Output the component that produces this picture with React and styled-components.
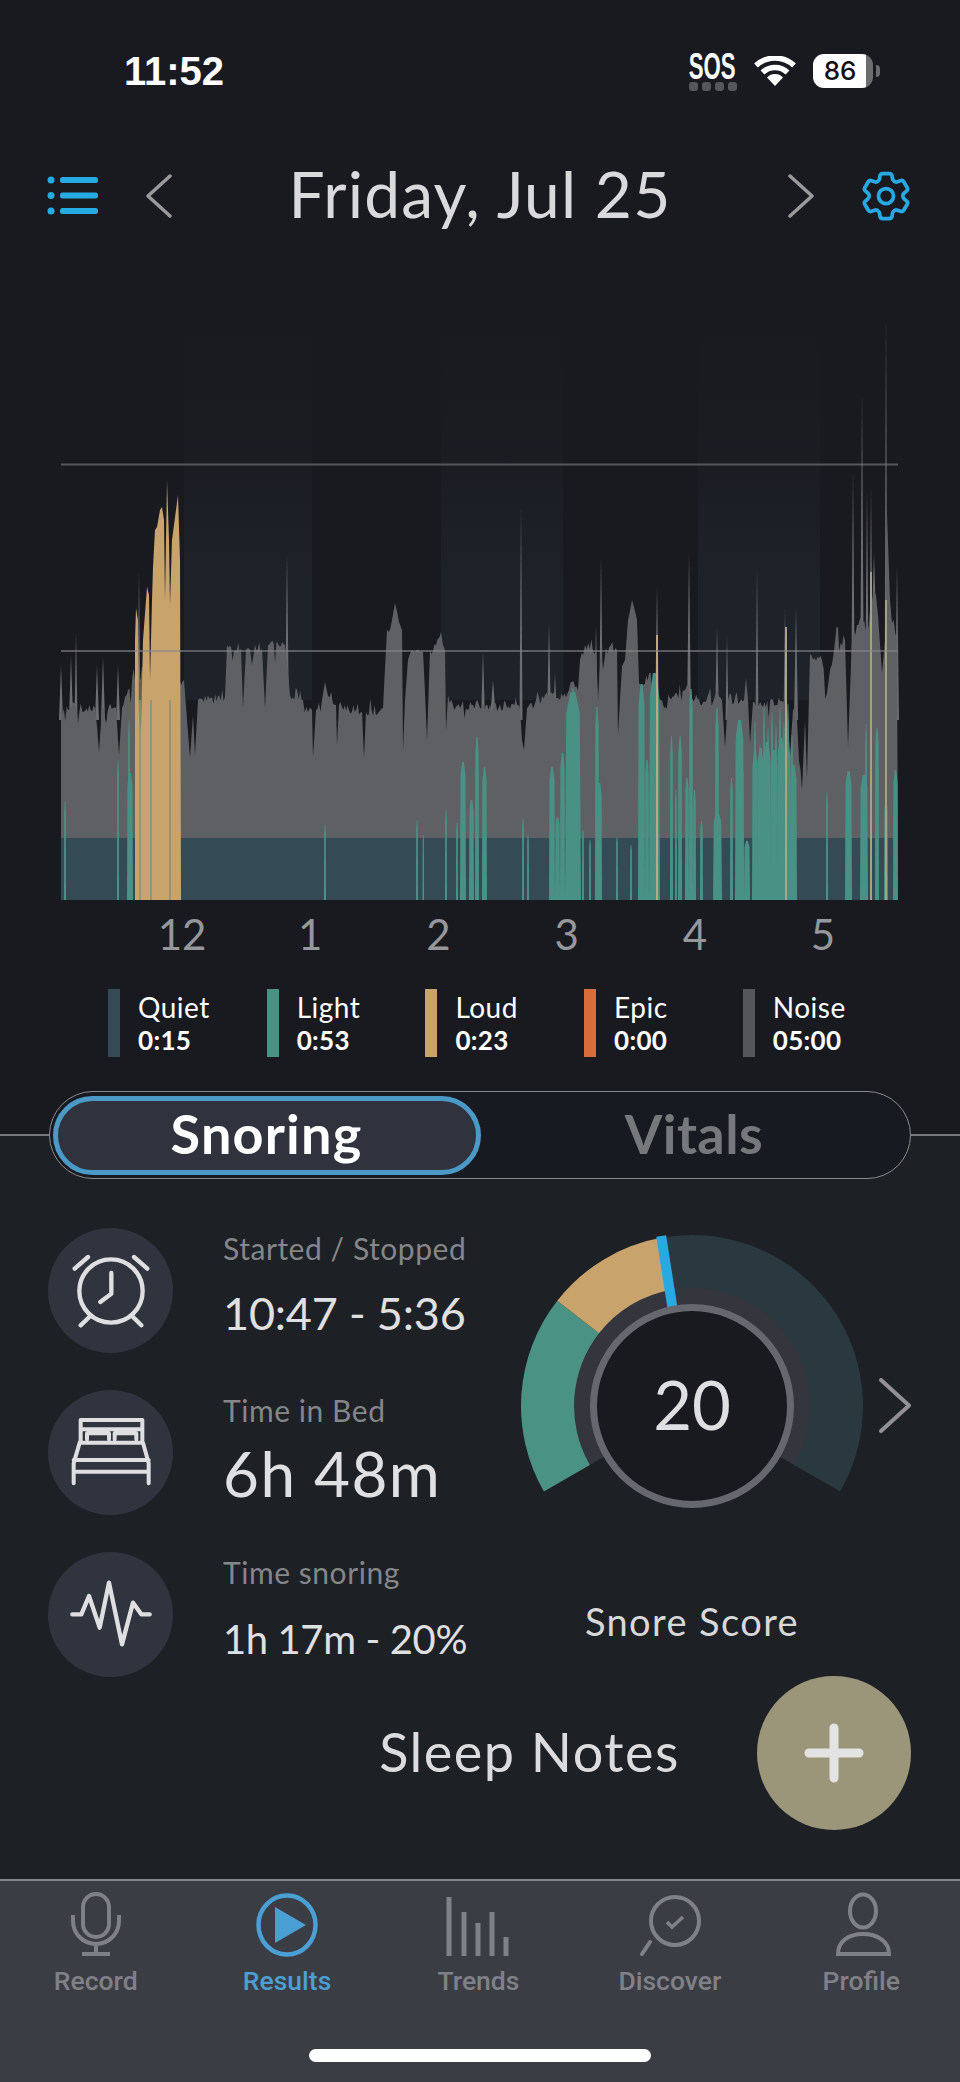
import React from 'react';
import styled, { createGlobalStyle } from 'styled-components';
import { HiOutlineCog6Tooth } from 'react-icons/hi2';

const sans = '"Lato", "Open Sans", sans-serif';

const GlobalStyle = createGlobalStyle`
  html, body { margin: 0; padding: 0; background: #191a20; }
  * { box-sizing: border-box; }
`;

const Screen = styled.div`
  width: 960px;
  height: 2082px;
  overflow: hidden;
  display: flex;
  flex-direction: column;
  background: #191a20;
  font-family: ${sans};
`;

/* status bar */
const StatusBar = styled.div`
  height: 142px;
  flex: none;
  display: flex;
  align-items: center;
  justify-content: space-between;
  padding: 0 80px 0 124px;
`;

const Clock = styled.span`
  font: 700 40px "Liberation Sans", sans-serif;
  color: #fff;
`;

const StatusIcons = styled.div`
  display: flex;
  align-items: center;
  gap: 17px;
`;

const Sos = styled.div`
  width: 49px;
  display: flex;
  flex-direction: column;
  align-items: center;
  gap: 1px;
`;

const SosText = styled.span`
  font: 700 37px/29px "Liberation Sans", sans-serif;
  color: #fff;
  transform: scaleX(0.6);
`;

const SosDots = styled.div`
  display: flex;
  gap: 4px;
`;

const SosDot = styled.i`
  width: 9px;
  height: 9px;
  border-radius: 3px;
  background: #55565b;
`;

const Battery = styled.div`
  display: flex;
  align-items: center;
  gap: 3px;
`;

const BatteryBody = styled.div`
  width: 60px;
  height: 34px;
  border-radius: 11px;
  padding-right: 6px;
  background: linear-gradient(90deg, #fff 88%, #6b6c70 88%);
  color: #111;
  font: 500 26px/34px Inter, sans-serif;
  text-align: center;
`;

const BatteryTip = styled.i`
  width: 4px;
  height: 12px;
  border-radius: 0 4px 4px 0;
  background: #6b6c70;
`;

/* date header */
const DateNav = styled.div`
  height: 108px;
  flex: none;
  display: flex;
  align-items: center;
  padding: 0 44px 0 47px;
`;

const NavBtn = styled.div`
  flex: none;
  display: flex;
  margin-left: ${(p) => p.$left || 0}px;
  color: ${(p) => p.$color || '#9a9a9c'};
`;

const DateTitle = styled.div`
  flex: 1;
  text-align: center;
  font-size: 64px;
  letter-spacing: 1.2px;
  padding-bottom: 5px;
  color: #dadadc;
  white-space: nowrap;
`;

const ChartSvg = styled.svg`
  display: block;
  flex: none;
  width: 960px;
  height: 660px;
`;

const Axis = styled.div`
  height: 50px;
  flex: none;
  display: grid;
  grid-template-columns: repeat(6, 128.2px);
  padding-left: 118px;
`;

const AxisLabel = styled.span`
  text-align: center;
  font-size: 42px;
  line-height: 48px;
  color: #96979b;
`;

const Legend = styled.div`
  flex: none;
  display: grid;
  grid-template-columns: repeat(5, 158.7px);
  padding: 29px 0 0 108px;
`;

const LegendItem = styled.div`
  display: flex;
  gap: 18px;
  height: 68px;
`;

const Swatch = styled.i`
  width: 12px;
  background: ${(p) => p.$color};
`;

const LegendText = styled.div`
  display: flex;
  flex-direction: column;
  color: #fff;
  font-size: 28px;
  letter-spacing: 0.5px;
  line-height: 33px;
  padding-top: 2px;
`;

const LegendValue = styled.span`
  font-weight: 700;
  font-size: 26px;
  letter-spacing: 0.3px;
`;

/* segmented toggle, sitting on the border between header and panel */
const ToggleRow = styled.div`
  flex: none;
  margin-top: 34px;
  display: flex;
  align-items: center;
  background: linear-gradient(#191a20 50%, #1d2025 50%);
`;

const RuleLine = styled.i`
  flex: 1;
  height: 2px;
  background: #77787a;
`;

const Toggle = styled.div`
  width: 862px;
  height: 88px;
  flex: none;
  display: flex;
  align-items: center;
  padding: 0 2.5px;
  border: 1.5px solid #8b8b8d;
  border-radius: 44px;
  background: #181a21;
`;

const ToggleTab = styled.div`
  flex: ${(p) => (p.$active ? '0 0 428px' : '1')};
  height: 79px;
  display: flex;
  align-items: center;
  justify-content: center;
  padding-bottom: 3px;
  font-size: 54px;
  font-weight: 700;
  letter-spacing: ${(p) => (p.$active ? 1.2 : 0.4)}px;
  border-radius: 40px;
  color: ${(p) => (p.$active ? '#fff' : '#77787b')};
  background: ${(p) => (p.$active ? '#30333d' : 'none')};
  border: ${(p) => (p.$active ? '5px solid #4b99c6' : 'none')};
`;

/* lower panel */
const Panel = styled.div`
  height: 700px;
  flex: none;
  background: #1d2025;
  padding-top: 49px;
`;

const PanelTop = styled.div`
  display: flex;
`;

const Stats = styled.div`
  width: 521px;
  flex: none;
  padding-left: 48px;
  display: flex;
  flex-direction: column;
  gap: 37px;
`;

const StatRow = styled.div`
  display: flex;
  gap: 50px;
`;

const StatBadge = styled.div`
  width: 125px;
  height: 125px;
  flex: none;
  border-radius: 50%;
  background: #30343f;
`;

const StatLabel = styled.div`
  font-size: 30px;
  letter-spacing: 0.55px;
  line-height: 40px;
  color: #85868a;
  white-space: nowrap;
`;

const StatValue = styled.div`
  font-size: ${(p) => p.$size}px;
  letter-spacing: ${(p) => p.$track}px;
  line-height: 60px;
  margin-top: ${(p) => p.$gap}px;
  color: #e0e0e2;
  white-space: nowrap;
`;

const ScoreCol = styled.div`
  width: 342px;
  flex: none;
`;

const ScoreLabel = styled.div`
  margin-top: 81px;
  text-align: center;
  font-size: 38px;
  letter-spacing: 1.4px;
  line-height: 44px;
  color: #d8d8da;
`;

const ScoreChevron = styled.div`
  margin: 150px 0 0 16px;
  display: flex;
`;

const Notes = styled.div`
  display: flex;
  align-items: center;
  justify-content: flex-end;
  gap: 77px;
  padding-right: 49px;
  margin-top: -1px;
`;

const NotesTitle = styled.span`
  font-size: 54px;
  letter-spacing: 1.5px;
  padding-bottom: 4px;
  color: #dcdcde;
`;

const Fab = styled.div`
  width: 154px;
  height: 154px;
  border-radius: 50%;
  background: #9b9679;
  display: flex;
  align-items: center;
  justify-content: center;
`;

/* tab bar */
const TabBar = styled.div`
  flex: 1;
  background: #3b3d45;
  border-top: 2px solid #85868a;
  padding-top: 10px;
  display: flex;
  flex-direction: column;
  align-items: center;
`;

const Tabs = styled.div`
  width: 957px;
  align-self: flex-start;
  display: grid;
  grid-template-columns: repeat(5, 1fr);
`;

const Tab = styled.div`
  display: flex;
  flex-direction: column;
  align-items: center;
  gap: 7px;
  color: ${(p) => (p.$active ? '#4a9fd4' : '#808186')};
`;

const TabLabel = styled.span`
  font: 500 26.5px/30px Roboto, sans-serif;
`;

const HomeBar = styled.div`
  width: 342px;
  height: 13px;
  margin-top: 53px;
  border-radius: 7px;
  background: #fff;
`;

/* chart data, all in page coordinates */
const BASE = 900;
const OUTLINE = [
  [61, 705], [95, 708], [99, 752], [102, 708], [116, 708], [119, 755], [122, 708], [128, 690], [135, 680],
  [184, 680], [187, 720], [190, 758], [193, 715], [195, 755], [198, 700], [225, 697], [227, 645], [241, 648],
  [243, 708], [246, 650], [250, 650], [252, 665], [255, 645], [262, 648], [265, 708], [268, 645], [285, 645],
  [288, 672], [290, 695], [303, 700], [308, 712], [312, 710], [313, 757], [316, 710], [322, 700], [325, 682],
  [328, 696], [336, 705], [337, 745], [339, 705], [362, 712], [364, 758], [366, 712], [383, 708], [387, 630],
  [392, 620], [395, 603], [399, 622], [402, 630], [403, 750], [405, 700], [408, 660], [412, 650], [423, 652],
  [427, 740], [430, 650], [436, 645], [441, 632], [445, 650], [446, 730], [448, 695], [453, 705], [520, 708],
  [524, 750], [527, 708], [545, 695], [563, 697], [572, 682], [578, 690], [580, 660], [585, 645], [596, 650],
  [598, 700], [601, 650], [603, 670], [606, 648], [617, 650], [618, 735], [620, 700], [622, 666], [625, 660],
  [628, 620], [632, 600], [635, 611], [637, 620], [639, 683], [655, 673], [660, 700], [664, 708], [687, 685],
  [692, 698], [713, 702], [717, 690], [722, 700], [725, 747], [728, 700], [744, 700], [746, 678], [748, 700],
  [750, 743], [753, 702], [783, 702], [787, 700], [790, 755], [793, 710], [796, 705], [802, 790], [805, 720],
  [807, 778], [810, 654], [822, 660], [827, 693], [835, 642], [845, 640], [848, 747], [852, 640], [857, 625],
  [870, 610], [874, 590], [878, 615], [882, 673], [885, 640], [887, 514], [890, 600], [892, 623], [897, 640],
  [898, BASE], [61, BASE],
];

const SPIKES = [
  [61, 665, 2], [71, 655, 2], [76, 632, 1.5], [97, 665, 2], [103, 657, 2], [118, 665, 2], [139, 570, 1.5],
  [287, 553, 2], [483, 651, 2], [493, 680, 3], [521, 505, 1.5], [549, 623, 2], [555, 673, 2], [596, 625, 2],
  [601, 557, 2], [657, 586, 2], [689, 553, 2], [717, 627, 2], [727, 635, 1.5], [757, 568, 1.5], [785, 607, 1.5],
  [796, 607, 2], [853, 471, 2], [862, 393, 2], [867, 490, 2], [871, 487, 2], [874, 553, 5], [886, 316, 1.5], [897, 565, 2],
];

const TEAL = [
  [64, 66, 802], [117, 119, 760], [127, 133, 773], [128, 130, 720], [138, 142, 700], [149, 153, 700],
  [324, 326, 825], [416, 418, 820], [422.5, 424, 835], [445, 447, 810], [456, 458, 823], [460, 466, 762],
  [469, 474, 800], [475, 479, 737], [482, 487, 767], [522, 524, 818], [527, 529, 835], [549, 555, 767],
  [555, 560, 817], [560, 565, 753], [565, 581, 692], [571, 575, 688], [582, 584, 830],
  [589, 591, 840], [595, 599, 707], [597, 602, 783], [616, 618, 837], [630, 632, 845], [638, 645, 684],
  [645, 649, 760], [649, 660, 673], [670, 673, 736], [675, 677, 790], [678, 682, 736], [685, 689, 778],
  [689, 693, 689], [693, 696, 790], [700, 703, 821], [713, 722, 813], [715, 719, 708], [730, 733, 778],
  [735, 744, 720], [739, 744, 760], [744, 750, 841],
  [752, 758, 750], [757, 764, 748], [763, 771, 742], [770, 778, 750], [777, 785, 738], [784, 791, 742], [790, 797, 765],
  [754, 756, 722], [759, 761, 745], [763, 765, 706], [767, 769, 728], [771, 773, 712], [775, 777, 726],
  [779, 781, 708], [783, 785, 722], [787, 789, 704], [791, 793, 735],
  [826, 828, 792], [845, 852, 771], [860, 868, 775],
  [865, 867, 724], [875, 879, 728], [884, 888, 800], [893, 898, 770],
];

const GOLD_LINES = [[657, 635, 2, '#bdaa78'], [786, 627, 2, '#a9a67f'], [871, 572, 2, '#a5a283'], [886, 600, 2, '#a5a283']];

const LOUD = [
  [135, BASE], [135, 640], [136, 608], [138, 620], [139, 720], [141, 730], [143, 640], [147, 587], [149, 595],
  [150, 680], [152, 600], [153, 567], [155, 530], [157, 527], [160, 510], [162, 507], [164, 520], [165, 600],
  [167, 480], [169, 540], [170, 605], [172, 540], [174, 525], [178, 495], [180, 560], [181, BASE],
];

// jitter the long flat stretches so the outline looks like sampled audio
const noisePath = () => {
  let seed = 17;
  const rnd = () => (seed = (seed * 16807) % 2147483647) / 2147483647;
  const pts = [];
  OUTLINE.forEach(([x, y], i) => {
    pts.push([x, y]);
    const next = OUTLINE[i + 1];
    if (!next || next[1] === BASE) return;
    const dx = next[0] - x;
    if (dx < 4) return;
    const n = Math.floor(dx / 1.4);
    for (let k = 1; k < n; k++) {
      const t = k / n;
      const r = rnd();
      const kick = r < 0.07 ? 13 : r > 0.94 ? -10 : 0;
      pts.push([x + dx * t, y + (next[1] - y) * t + (rnd() - 0.45) * 10 + kick]);
    }
  });
  return 'M' + pts.map((p) => p[0].toFixed(1) + ' ' + p[1].toFixed(1)).join('L') + 'Z';
};

const taper = ([x0, x1, top]) => {
  const w = x1 - x0;
  const mid = top + (BASE - top) * 0.1;
  return `${x0},${BASE} ${x0 + w * 0.08},${mid} ${x0 + w * 0.35},${top} ${x1 - w * 0.35},${top} ${x1 - w * 0.08},${mid} ${x1},${BASE}`;
};

const NOISE_D = noisePath();

const Chart = () => (
  <ChartSvg viewBox="0 250 960 660">
    <defs>
      <linearGradient id="band" x1="0" y1="0" x2="0" y2="1">
        <stop offset="0" stopColor="#1e2229" stopOpacity="0" />
        <stop offset="0.35" stopColor="#1e2229" stopOpacity="0.25" />
        <stop offset="0.7" stopColor="#1e2229" />
      </linearGradient>
    </defs>
    {[[184, 128], [441, 122], [698, 122]].map(([x, w]) => (
      <rect key={x} x={x} y={320} width={w} height={380} fill="url(#band)" />
    ))}
    {SPIKES.map(([x, top, w]) => (
      <polygon key={x} points={`${x - w},720 ${x},${top} ${x + w},720`} fill="#6c6d71" />
    ))}
    <path d={NOISE_D} fill="#5f6064" />
    <rect x={61} y={838} width={837} height={62} fill="#344b56" />
    {TEAL.map((t) => (
      <polygon key={t[0] + '-' + t[2]} points={taper(t)} fill="#4a9185" />
    ))}
    <polygon points={LOUD.map((p) => p.join(',')).join(' ')} fill="#c9a36c" />
    {[140, 151, 170].map((x) => (
      <rect key={x} x={x - 0.75} y={700} width={1.5} height={200} fill="#7f9180" />
    ))}
    {GOLD_LINES.map(([x, top, w, color]) => (
      <rect key={x} x={x - w / 2} y={top} width={w} height={BASE - top} fill={color} />
    ))}
    <rect x={61} y={463.5} width={837} height={2} fill="#7f7f84" fillOpacity="0.6" />
    <rect x={61} y={650} width={837} height={2} fill="#85858a" fillOpacity="0.6" />
  </ChartSvg>
);

const polar = (r, deg) => {
  const a = (deg * Math.PI) / 180;
  return [(r * Math.sin(a)).toFixed(2), (-r * Math.cos(a)).toFixed(2)];
};

const sector = (r0, r1, from, to) => {
  const [a, b] = polar(r1, from);
  const [c, d] = polar(r1, to);
  const [e, f] = polar(r0, to);
  const [g, h] = polar(r0, from);
  const large = to - from > 180 ? 1 : 0;
  return `M${a} ${b}A${r1} ${r1} 0 ${large} 1 ${c} ${d}L${e} ${f}A${r0} ${r0} 0 ${large} 0 ${g} ${h}Z`;
};

const Gauge = () => (
  <svg width="342" height="290" viewBox="-171 -178 342 290" style={{ display: 'block' }}>
    <path d={sector(100, 119, -120, 120)} fill="#35363d" />
    <path d={sector(118, 171, -120, -52)} fill="#4a9283" />
    <path d={sector(118, 171, -52, -10)} fill="#c9a36c" />
    <path d={sector(118, 171, -10, 120)} fill="#2a3840" />
    <line x1="-30.8" y1="-170" x2="-19.5" y2="-98" stroke="#27a9e1" strokeWidth="10" />
    <circle r="98.5" fill="#191a20" stroke="#67676f" strokeWidth="7" />
    <text y="24" textAnchor="middle" fontSize="67" fontFamily={sans} fill="#dfdfe1">20</text>
  </svg>
);

const Chevron = ({ dir = 'right', w = 26, h = 44, sw = 3.5, color = '#9a9a9c' }) => (
  <svg width={w} height={h} viewBox={`0 0 ${w} ${h}`} fill="none" stroke={color} strokeWidth={sw} strokeLinecap="round" strokeLinejoin="round">
    {dir === 'right'
      ? <path d={`M2 2L${w - 2} ${h / 2}L2 ${h - 2}`} />
      : <path d={`M${w - 2} 2L2 ${h / 2}L${w - 2} ${h - 2}`} />}
  </svg>
);

const Wifi = () => (
  <svg width="42" height="30" viewBox="0 0 42 30" fill="none" stroke="#fff" strokeWidth="5.5">
    <path d="M2 9.5A28 28 0 0 1 40 9.5" />
    <path d="M8.5 16.5A18 18 0 0 1 33.5 16.5" />
    <path d="M21 30L13 21.5A11 11 0 0 1 29 21.5Z" fill="#fff" stroke="none" />
  </svg>
);

const ListIcon = () => (
  <svg width="52" height="40" viewBox="0 0 52 40" fill="#27a9e1">
    <circle cx="4" cy="4" r="3.5" />
    <circle cx="4" cy="19.5" r="3.5" />
    <circle cx="4" cy="35" r="3.5" />
    <rect x="13" y="1" width="38" height="6" rx="2.5" />
    <rect x="13" y="16.5" width="38" height="6" rx="2.5" />
    <rect x="13" y="32" width="38" height="6" rx="2.5" />
  </svg>
);

const badgeStroke = { fill: 'none', stroke: '#dfdfe1', strokeWidth: 13, strokeLinecap: 'round', strokeLinejoin: 'round' };

const AlarmIcon = () => (
  <svg width="125" height="125" viewBox="145 83 375 375" {...badgeStroke}>
    <circle cx="334" cy="272" r="95" />
    <path d="M225 205L265 170M443 205L403 170M243 375L272 347M425 375L397 347M335 218V280L302 305" />
  </svg>
);

const BedIcon = () => (
  <svg width="125" height="125" viewBox="145 570 375 375" {...badgeStroke} strokeWidth="12">
    <path d="M243 725V660H428V725M243 688H428M262 718V700H328V718M345 718V700H410V718M240 728H430L447 790V850M240 728L222 790V850M222 780H447M222 815H447" />
  </svg>
);

const PulseIcon = () => (
  <svg width="125" height="125" viewBox="145 1053 375 375" {...badgeStroke}>
    <path d="M218 1240H245L268 1185L300 1280L328 1145L367 1330L400 1205L425 1240H450" />
  </svg>
);

const tabIcon = { width: 80, height: 68, viewBox: '0 0 80 68', fill: 'none', stroke: 'currentColor', strokeWidth: 4 };

const TAB_ICONS = {
  Record: (
    <svg {...tabIcon}>
      <rect x="27" y="3" width="26" height="43" rx="13" />
      <path d="M17 24V30a23 23 0 0 0 46 0V24M40 53V63M26 63H54" />
    </svg>
  ),
  Results: (
    <svg {...tabIcon} strokeWidth="4.5">
      <ellipse cx="40" cy="34" rx="28.5" ry="29.5" />
      <path d="M28 16L59 34L28 52Z" fill="currentColor" stroke="none" />
    </svg>
  ),
  Trends: (
    <svg {...tabIcon} strokeWidth="5">
      <path d="M11 6V65M26 21V65M40 32V65M54 21V65M68 46V65" />
    </svg>
  ),
  Discover: (
    <svg {...tabIcon}>
      <circle cx="45" cy="30" r="24" />
      <path d="M20 51L12 63" strokeLinecap="round" />
      <path d="M37 31L42 36L53 26" strokeWidth="3.5" />
    </svg>
  ),
  Profile: (
    <svg {...tabIcon}>
      <ellipse cx="42" cy="20" rx="13" ry="16.5" />
      <path d="M17 63C17 50 28 43 42 43C56 43 68 50 68 63Z" />
    </svg>
  ),
};

const HOURS = ['12', '1', '2', '3', '4', '5'];

const LEGEND = [
  ['Quiet', '0:15', '#344b56'],
  ['Light', '0:53', '#4a9185'],
  ['Loud', '0:23', '#c9a36c'],
  ['Epic', '0:00', '#d86c3a'],
  ['Noise', '05:00', '#55565b'],
];

const STATS = [
  { label: 'Started / Stopped', value: '10:47 - 5:36', size: 45, gap: 15, track: -0.2, icon: <AlarmIcon /> },
  { label: 'Time in Bed', value: '6h 48m', size: 62, gap: 13, track: 1.5, icon: <BedIcon /> },
  { label: 'Time snoring', value: '1h 17m - 20%', size: 40, gap: 17, track: -0.4, icon: <PulseIcon /> },
];

export default function App() {
  return (
    <Screen>
      <GlobalStyle />
      <StatusBar>
        <Clock>11:52</Clock>
        <StatusIcons>
          <Sos>
            <SosText>SOS</SosText>
            <SosDots>
              {[0, 1, 2, 3].map((d) => <SosDot key={d} />)}
            </SosDots>
          </Sos>
          <Wifi />
          <Battery>
            <BatteryBody>86</BatteryBody>
            <BatteryTip />
          </Battery>
        </StatusIcons>
      </StatusBar>

      <DateNav>
        <NavBtn><ListIcon /></NavBtn>
        <NavBtn $left={47}><Chevron dir="left" /></NavBtn>
        <DateTitle>Friday, Jul 25</DateTitle>
        <NavBtn><Chevron /></NavBtn>
        <NavBtn $left={42} $color="#27a9e1"><HiOutlineCog6Tooth size={60} strokeWidth={1.5} /></NavBtn>
      </DateNav>

      <Chart />

      <Axis>
        {HOURS.map((h) => <AxisLabel key={h}>{h}</AxisLabel>)}
      </Axis>

      <Legend>
        {LEGEND.map(([name, time, color]) => (
          <LegendItem key={name}>
            <Swatch $color={color} />
            <LegendText>
              {name}
              <LegendValue>{time}</LegendValue>
            </LegendText>
          </LegendItem>
        ))}
      </Legend>

      <ToggleRow>
        <RuleLine />
        <Toggle>
          <ToggleTab $active>Snoring</ToggleTab>
          <ToggleTab>Vitals</ToggleTab>
        </Toggle>
        <RuleLine />
      </ToggleRow>

      <Panel>
        <PanelTop>
          <Stats>
            {STATS.map((s) => (
              <StatRow key={s.label}>
                <StatBadge>{s.icon}</StatBadge>
                <div>
                  <StatLabel>{s.label}</StatLabel>
                  <StatValue $size={s.size} $gap={s.gap} $track={s.track}>{s.value}</StatValue>
                </div>
              </StatRow>
            ))}
          </Stats>
          <ScoreCol>
            <Gauge />
            <ScoreLabel>Snore Score</ScoreLabel>
          </ScoreCol>
          <ScoreChevron>
            <Chevron w={32} h={55} sw={4} color="#919195" />
          </ScoreChevron>
        </PanelTop>
        <Notes>
          <NotesTitle>Sleep Notes</NotesTitle>
          <Fab>
            <svg width="60" height="60" viewBox="0 0 60 60" stroke="#e3e3e3" strokeWidth="9" strokeLinecap="round">
              <path d="M30 5V55M5 30H55" />
            </svg>
          </Fab>
        </Notes>
      </Panel>

      <TabBar>
        <Tabs>
          {Object.keys(TAB_ICONS).map((name) => (
            <Tab key={name} $active={name === 'Results'}>
              {TAB_ICONS[name]}
              <TabLabel>{name}</TabLabel>
            </Tab>
          ))}
        </Tabs>
        <HomeBar />
      </TabBar>
    </Screen>
  );
}
